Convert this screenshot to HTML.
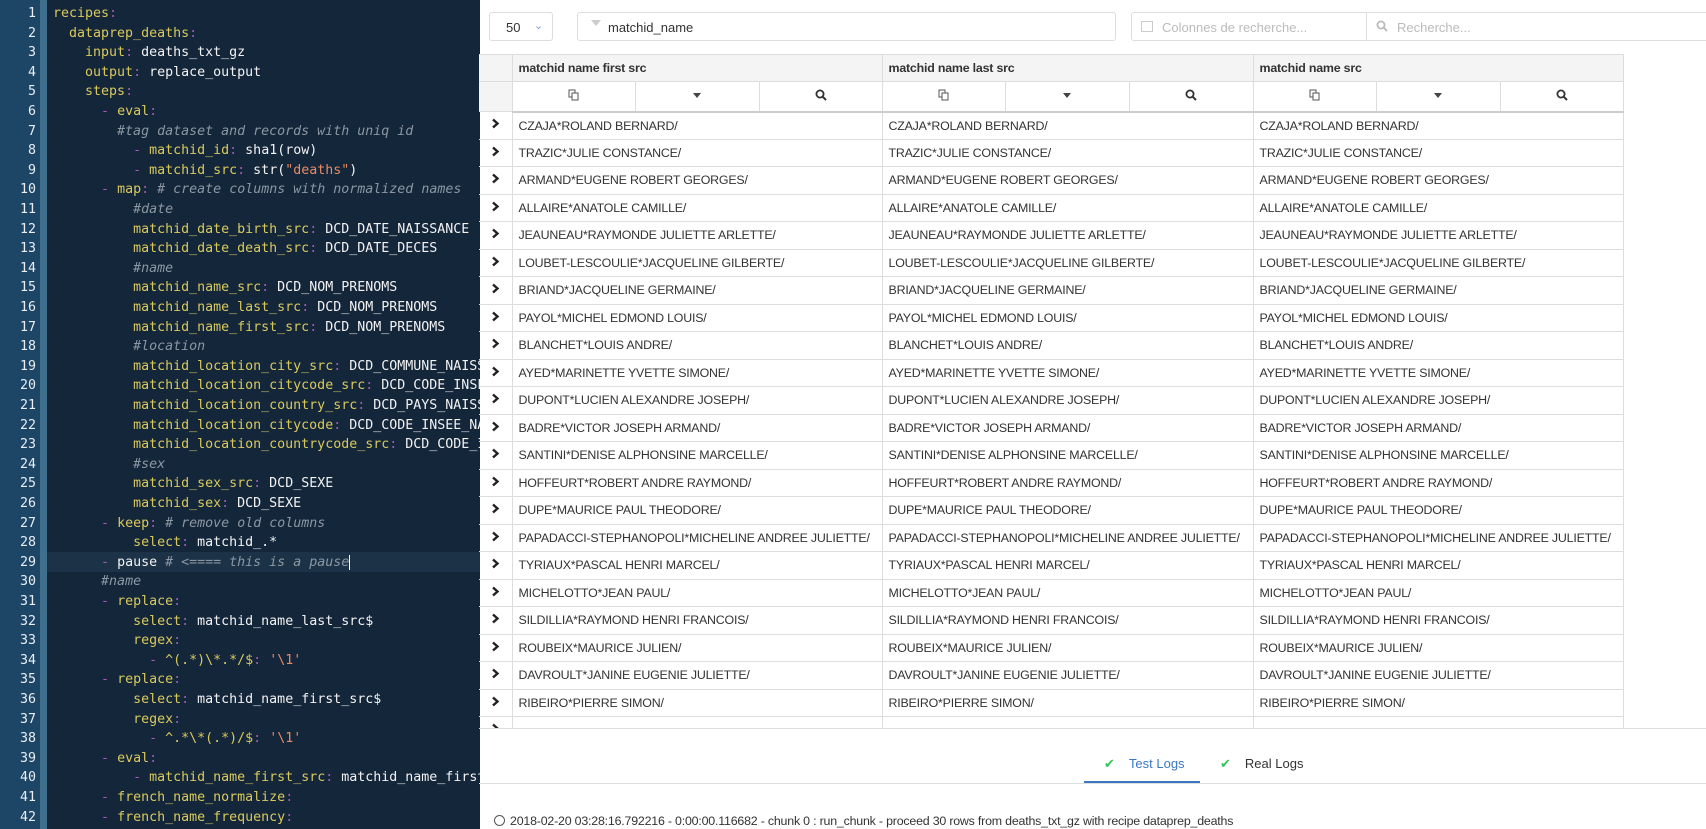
<!DOCTYPE html>
<html><head><meta charset="utf-8"><style>
*{margin:0;padding:0;box-sizing:border-box}
body{width:1706px;height:829px;overflow:hidden;background:#fff;font-family:"Liberation Sans",sans-serif;position:relative}
#ed{position:absolute;left:0;top:0;width:480px;height:829px;background:#14263a;overflow:hidden}
#gut{position:absolute;left:0;top:0;width:40px;height:829px;background:#1d4565}
#gut2{position:absolute;left:40px;top:0;width:7px;height:829px;background:#3f6f8c}
.ln{position:absolute;left:0;width:36px;text-align:right;color:#e8eef3;font:13.3px/19.6px "DejaVu Sans Mono",monospace}
.cl{position:absolute;left:53px;white-space:pre;color:#f2f2f2;font:13.3px/19.6px "DejaVu Sans Mono",monospace}
.k{color:#d9c95c}.p{color:#a15ab5}.c{color:#8b97a3;font-style:italic}.s{color:#e88a63}
#hl{position:absolute;left:47px;width:433px;height:19.6px;background:#1c3347}
.box{position:absolute;border:1px solid #ddd;border-radius:3px;background:#fff;font-size:13px;color:#333}
table{position:absolute;left:479px;top:54px;border-collapse:collapse;font-size:12.4px;color:#333;letter-spacing:-0.2px}
td,th{border:1px solid #ddd;height:27.5px;padding:0 6px;text-align:left;white-space:nowrap}
th{background:#f4f4f4;font-weight:bold;height:27px}
.ic td{height:30px;background:#fff;text-align:center;border-bottom:2px solid #ccc}
.ex{width:33px;text-align:center;font-weight:bold;border-left:none}
</style></head><body>
<div id="ed"><div id="gut"></div><div id="gut2"></div>
<div id="hl" style="top:552.4px"></div>
<div id="code"></div>
</div>
<div id="right"></div>
<script>
var L=[
'<span class=k>recipes</span><span class=p>:</span>',
'  <span class=k>dataprep_deaths</span><span class=p>:</span>',
'    <span class=k>input</span><span class=p>:</span> deaths_txt_gz',
'    <span class=k>output</span><span class=p>:</span> replace_output',
'    <span class=k>steps</span><span class=p>:</span>',
'      <span class=p>-</span> <span class=k>eval</span><span class=p>:</span>',
'        <span class=c>#tag dataset and records with uniq id</span>',
'          <span class=p>-</span> <span class=k>matchid_id</span><span class=p>:</span> sha1(row)',
'          <span class=p>-</span> <span class=k>matchid_src</span><span class=p>:</span> str(<span class=s>"deaths"</span>)',
'      <span class=p>-</span> <span class=k>map</span><span class=p>:</span> <span class=c># create columns with normalized names</span>',
'          <span class=c>#date</span>',
'          <span class=k>matchid_date_birth_src</span><span class=p>:</span> DCD_DATE_NAISSANCE',
'          <span class=k>matchid_date_death_src</span><span class=p>:</span> DCD_DATE_DECES',
'          <span class=c>#name</span>',
'          <span class=k>matchid_name_src</span><span class=p>:</span> DCD_NOM_PRENOMS',
'          <span class=k>matchid_name_last_src</span><span class=p>:</span> DCD_NOM_PRENOMS',
'          <span class=k>matchid_name_first_src</span><span class=p>:</span> DCD_NOM_PRENOMS',
'          <span class=c>#location</span>',
'          <span class=k>matchid_location_city_src</span><span class=p>:</span> DCD_COMMUNE_NAISSANCE',
'          <span class=k>matchid_location_citycode_src</span><span class=p>:</span> DCD_CODE_INSEE_NAISSANCE',
'          <span class=k>matchid_location_country_src</span><span class=p>:</span> DCD_PAYS_NAISSANCE',
'          <span class=k>matchid_location_citycode</span><span class=p>:</span> DCD_CODE_INSEE_NAISSANCE',
'          <span class=k>matchid_location_countrycode_src</span><span class=p>:</span> DCD_CODE_INSEE',
'          <span class=c>#sex</span>',
'          <span class=k>matchid_sex_src</span><span class=p>:</span> DCD_SEXE',
'          <span class=k>matchid_sex</span><span class=p>:</span> DCD_SEXE',
'      <span class=p>-</span> <span class=k>keep</span><span class=p>:</span> <span class=c># remove old columns</span>',
'          <span class=k>select</span><span class=p>:</span> matchid_.*',
'      <span class=p>-</span> pause <span class=c># &lt;==== this is a pause</span><span style="border-left:1px solid #fff"></span>',
'      <span class=c>#name</span>',
'      <span class=p>-</span> <span class=k>replace</span><span class=p>:</span>',
'          <span class=k>select</span><span class=p>:</span> matchid_name_last_src$',
'          <span class=k>regex</span><span class=p>:</span>',
'            <span class=p>-</span> <span class=k>^(.*)\\*.*/$</span><span class=p>:</span> <span class=s>\'\\1\'</span>',
'      <span class=p>-</span> <span class=k>replace</span><span class=p>:</span>',
'          <span class=k>select</span><span class=p>:</span> matchid_name_first_src$',
'          <span class=k>regex</span><span class=p>:</span>',
'            <span class=p>-</span> <span class=k>^.*\\*(.*)/$</span><span class=p>:</span> <span class=s>\'\\1\'</span>',
'      <span class=p>-</span> <span class=k>eval</span><span class=p>:</span>',
'          <span class=p>-</span> <span class=k>matchid_name_first_src</span><span class=p>:</span> matchid_name_first_src',
'      <span class=p>-</span> <span class=k>french_name_normalize</span><span class=p>:</span>',
'      <span class=p>-</span> <span class=k>french_name_frequency</span><span class=p>:</span>'];
var h='';for(var i=0;i<L.length;i++){var t=4+i*19.6;h+='<div class=ln style="top:'+t+'px">'+(i+1)+'</div><div class=cl style="top:'+t+'px">'+L[i]+'</div>';}
document.getElementById('code').innerHTML=h;
var N=['CZAJA*ROLAND BERNARD/','TRAZIC*JULIE CONSTANCE/','ARMAND*EUGENE ROBERT GEORGES/','ALLAIRE*ANATOLE CAMILLE/','JEAUNEAU*RAYMONDE JULIETTE ARLETTE/','LOUBET-LESCOULIE*JACQUELINE GILBERTE/','BRIAND*JACQUELINE GERMAINE/','PAYOL*MICHEL EDMOND LOUIS/','BLANCHET*LOUIS ANDRE/','AYED*MARINETTE YVETTE SIMONE/','DUPONT*LUCIEN ALEXANDRE JOSEPH/','BADRE*VICTOR JOSEPH ARMAND/','SANTINI*DENISE ALPHONSINE MARCELLE/','HOFFEURT*ROBERT ANDRE RAYMOND/','DUPE*MAURICE PAUL THEODORE/','PAPADACCI-STEPHANOPOLI*MICHELINE ANDREE JULIETTE/','TYRIAUX*PASCAL HENRI MARCEL/','MICHELOTTO*JEAN PAUL/','SILDILLIA*RAYMOND HENRI FRANCOIS/','ROUBEIX*MAURICE JULIEN/','DAVROULT*JANINE EUGENIE JULIETTE/','RIBEIRO*PIERRE SIMON/','&nbsp;'];
var cp='<svg width="12" height="12" viewBox="0 0 12 12"><rect x="1" y="1" width="6" height="7" fill="none" stroke="#555"/><rect x="4" y="4" width="6" height="7" fill="#fff" stroke="#555"/></svg>';
var ar='<span style="display:inline-block;border:4px solid transparent;border-top:5px solid #444;vertical-align:-2px"></span>';
var sr='<svg width="12" height="12" viewBox="0 0 12 12"><circle cx="5" cy="5" r="3.6" fill="none" stroke="#333" stroke-width="1.8"/><path d="M7.6 7.6L11 11" stroke="#333" stroke-width="2"/></svg>';
var g='<td style="width:123px">'+cp+'</td><td style="width:124px">'+ar+'</td><td style="width:123px">'+sr+'</td>';
var t='<div style="position:absolute;left:479px;top:54px;width:1227px;height:675px;overflow:hidden;border-bottom:1px solid #ddd"><table style="left:0;top:0">';
t+='<tr><th class=ex style="background:#f4f4f4"></th><th colspan=3 style="width:370px">matchid name first src</th><th colspan=3 style="width:371px">matchid name last src</th><th colspan=3 style="width:370px">matchid name src</th></tr>';
t+='<tr class=ic><td class=ex style="background:#f4f4f4;border-bottom:1px solid #ddd"></td>'+g+g+g+'</tr>';
for(var i=0;i<N.length;i++){t+='<tr><td class=ex><svg width="9" height="11" viewBox="0 0 9 11"><path d="M2 1.5L6.5 5.5L2 9.5" fill="none" stroke="#222" stroke-width="2.4"/></svg></td><td colspan=3>'+N[i]+'</td><td colspan=3>'+N[i]+'</td><td colspan=3>'+N[i]+'</td></tr>';}
t+='</table></div>';
t+='<div class=box style="left:489px;top:12px;width:64px;height:29px;padding:7px 0 0 16px">50<span style="position:absolute;left:44px;top:6px;color:#7aa0d0;font-size:11px">&#8964;</span></div>';
t+='<div class=box style="left:577px;top:12px;width:539px;height:29px;padding:7px 0 0 30px">matchid_name<span style="position:absolute;left:13px;top:7px;width:0;height:0;border:5px solid transparent;border-top:6px solid #ccc"></span></div>';
t+='<div class=box style="left:1131px;top:12px;width:236px;height:29px;padding:7px 0 0 30px;color:#bbb;border-radius:3px 0 0 3px">Colonnes de recherche...<span style="position:absolute;left:9px;top:8px;width:12px;height:11px;border:1.5px solid #ccc"></span></div>';
t+='<div class=box style="left:1366px;top:12px;width:345px;height:29px;padding:7px 0 0 30px;color:#bbb;border-radius:0">Recherche...<span style="position:absolute;left:9px;top:7px">'+sr.replace(/#333/g,'#bbb')+'</span></div>';
t+='<div style="position:absolute;left:479px;top:783px;width:1227px;border-top:1px solid #ddd"></div>';
t+='<div style="position:absolute;left:1084px;top:781px;width:116px;border-top:2px solid #3b78c3"></div>';
t+='<div style="position:absolute;left:1104px;top:756px;font-size:13px;color:#3b78c3"><span style="color:#2ec55a;margin-right:14px">&#10004;</span>Test Logs</div>';
t+='<div style="position:absolute;left:1220px;top:756px;font-size:13px;color:#333"><span style="color:#2ec55a;margin-right:14px">&#10004;</span>Real Logs</div>';
t+='<div style="position:absolute;left:494px;top:814px;font-size:12.4px;color:#333;letter-spacing:-0.2px;white-space:nowrap"><span style="display:inline-block;width:11px;height:11px;border:1.5px solid #555;border-radius:50%;vertical-align:-1px;margin-right:5px"></span>2018-02-20 03:28:16.792216 - 0:00:00.116682 - chunk 0 : run_chunk - proceed 30 rows from deaths_txt_gz with recipe dataprep_deaths</div>';
document.getElementById('right').innerHTML=t;
</script>
</body></html>
